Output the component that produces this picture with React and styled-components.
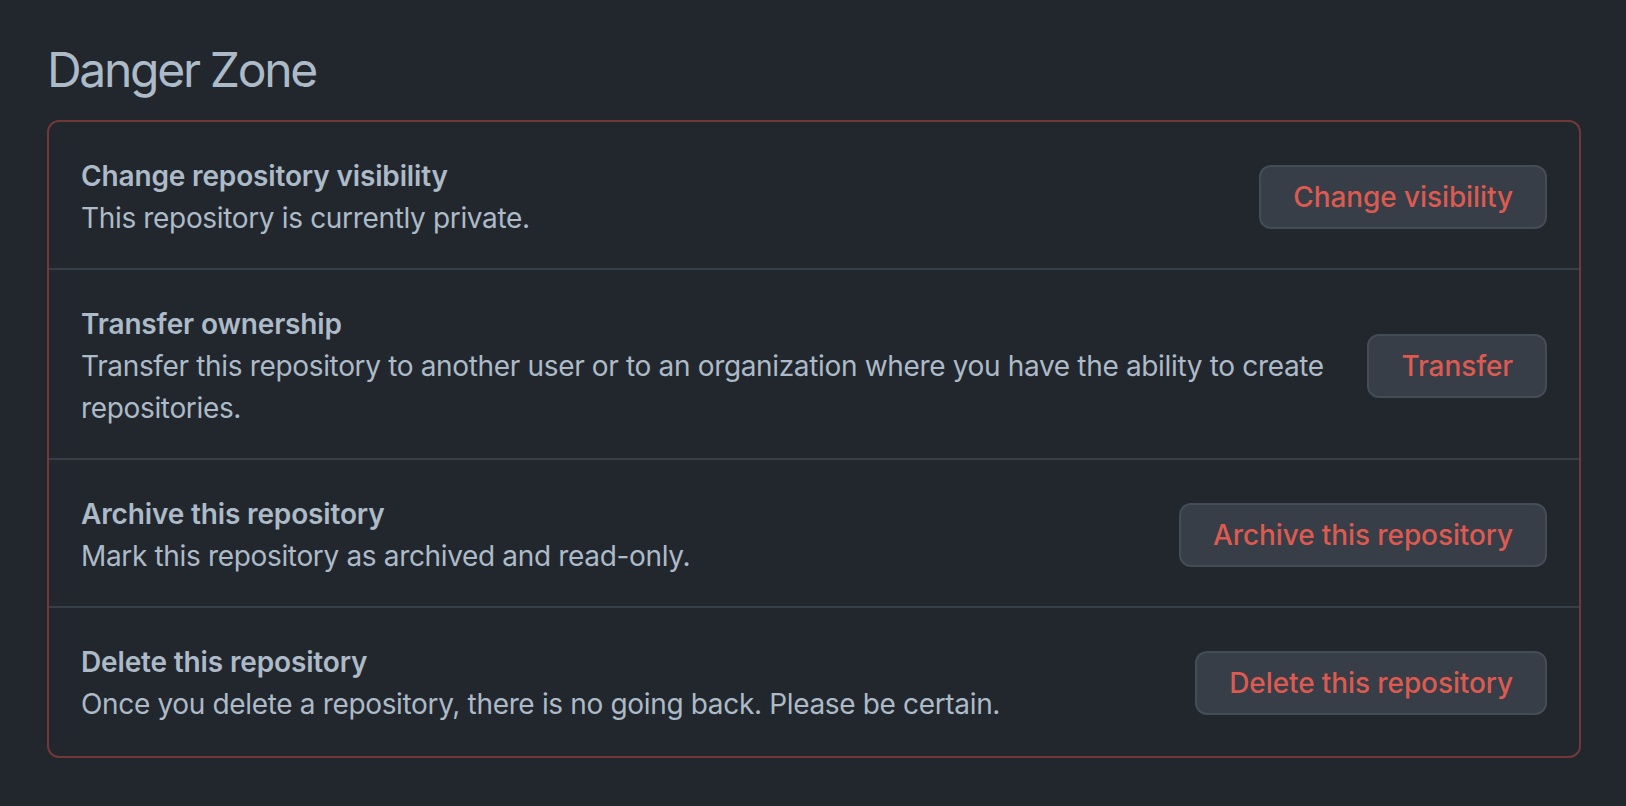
import React from 'react';
import styled, { createGlobalStyle } from 'styled-components';

const GlobalStyle = createGlobalStyle`
  html, body {
    margin: 0;
    background: #22272e;
  }
  body {
    font-family: Inter, "Noto Sans", "Liberation Sans", sans-serif;
    color: #adbac7;
  }
`;

const Page = styled.div`
  padding: 34px 45px 40px 47px;
`;

const Heading = styled.h2`
  margin: 0 0 14px;
  font-size: 48px;
  font-weight: 400;
  line-height: 1.5;
  letter-spacing: -2.3px;
  color: #adbac7;
`;

const DangerBox = styled.div`
  border: 2px solid rgba(229, 83, 75, 0.4);
  border-radius: 12px;
`;

const Row = styled.div`
  display: flex;
  align-items: center;
  gap: 32px;
  padding: 33px 32px 29px;
  & + & {
    border-top: 2px solid #373e47;
  }
  &:last-child {
    padding-bottom: 31px;
  }
`;

const Info = styled.div`
  flex: 1 1 auto;
  font-size: 28px;
  line-height: 42px;
  letter-spacing: -0.34px;
`;

const Title = styled.strong`
  display: block;
  font-weight: 600;
  letter-spacing: -0.15px;
`;

const Desc = styled.p`
  margin: 0;
`;

const DangerButton = styled.button`
  flex: none;
  height: 64px;
  padding: 0 32px;
  font-family: inherit;
  font-size: 28px;
  font-weight: 500;
  line-height: 40px;
  letter-spacing: -0.1px;
  color: #dc5a50;
  background: #373e47;
  border: 2px solid #444c56;
  border-radius: 12px;
  cursor: pointer;
  white-space: nowrap;
`;

const items = [
  {
    title: 'Change repository visibility',
    desc: 'This repository is currently private.',
    action: 'Change visibility',
  },
  {
    title: 'Transfer ownership',
    desc: 'Transfer this repository to another user or to an organization where you have the ability to create repositories.',
    action: 'Transfer',
  },
  {
    title: 'Archive this repository',
    desc: 'Mark this repository as archived and read-only.',
    action: 'Archive this repository',
  },
  {
    title: 'Delete this repository',
    desc: 'Once you delete a repository, there is no going back. Please be certain.',
    action: 'Delete this repository',
  },
];

export default function App() {
  return (
    <Page>
      <GlobalStyle />
      <Heading>Danger Zone</Heading>
      <DangerBox>
        {items.map((item) => (
          <Row key={item.title}>
            <Info>
              <Title>{item.title}</Title>
              <Desc>{item.desc}</Desc>
            </Info>
            <DangerButton>{item.action}</DangerButton>
          </Row>
        ))}
      </DangerBox>
    </Page>
  );
}
